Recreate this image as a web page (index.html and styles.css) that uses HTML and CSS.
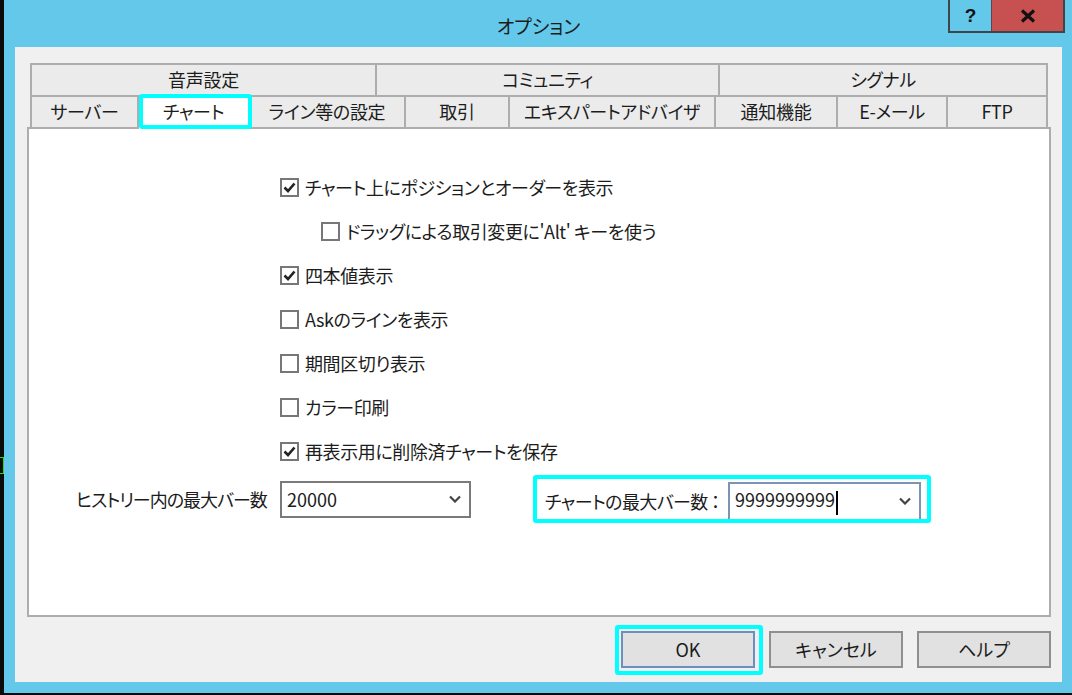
FILE: index.html
```html
<!DOCTYPE html>
<html lang="ja">
<head>
    <meta charset="UTF-8">
    <title>オプション</title>
    <link rel="stylesheet" href="styles.css">
</head>
<body>

<div class="chart-edge"><div class="chart-mark"></div></div>

<div class="window">
    <!-- Title bar -->
    <div class="titlebar">
        <span class="title">オプション</span>
        <div class="controls">
            <div class="ctrl help">?</div>
            <div class="ctrl close">
                <svg width="16" height="14" viewBox="0 0 16 14"><path d="M2 1.5 L14 12.5 M14 1.5 L2 12.5" stroke="#111" stroke-width="3.2" fill="none"/></svg>
            </div>
        </div>
    </div>

    <div class="client">
        <!-- Tabs -->
        <div class="tabs">
            <div class="tab-row back">
                <div class="tab">音声設定</div>
                <div class="tab">コミュニティ</div>
                <div class="tab">シグナル</div>
            </div>
            <div class="tab-row front">
                <div class="tab">サーバー</div>
                <div class="tab active">チャート</div>
                <div class="tab">ライン等の設定</div>
                <div class="tab">取引</div>
                <div class="tab">エキスパートアドバイザ</div>
                <div class="tab">通知機能</div>
                <div class="tab">E-メール</div>
                <div class="tab">FTP</div>
            </div>
        </div>

        <!-- Chart page -->
        <div class="panel">
            <div class="options">
                <div class="check on">
                    <span class="box"><svg width="13" height="11" viewBox="0 0 13 11"><path d="M1.5 5.5 L5 9 L11.5 1.5" stroke="#222" stroke-width="2.6" fill="none"/></svg></span>
                    <span>チャート上にポジションとオーダーを表示</span>
                </div>
                <div class="check sub">
                    <span class="box"></span>
                    <span>ドラッグによる取引変更に'Alt' キーを使う</span>
                </div>
                <div class="check on">
                    <span class="box"><svg width="13" height="11" viewBox="0 0 13 11"><path d="M1.5 5.5 L5 9 L11.5 1.5" stroke="#222" stroke-width="2.6" fill="none"/></svg></span>
                    <span>四本値表示</span>
                </div>
                <div class="check">
                    <span class="box"></span>
                    <span>Askのラインを表示</span>
                </div>
                <div class="check">
                    <span class="box"></span>
                    <span>期間区切り表示</span>
                </div>
                <div class="check">
                    <span class="box"></span>
                    <span>カラー印刷</span>
                </div>
                <div class="check on">
                    <span class="box"><svg width="13" height="11" viewBox="0 0 13 11"><path d="M1.5 5.5 L5 9 L11.5 1.5" stroke="#222" stroke-width="2.6" fill="none"/></svg></span>
                    <span>再表示用に削除済チャートを保存</span>
                </div>
            </div>

            <div class="bars">
                <span class="bars-label">ヒストリー内の最大バー数</span>
                <div class="combo">
                    <span>20000</span>
                    <svg width="12" height="8" viewBox="0 0 12 8"><path d="M1 1.5 L6 6.5 L11 1.5" stroke="#444" stroke-width="2.2" fill="none"/></svg>
                </div>
                <div class="mark">
                    <span class="mark-label">チャートの最大バー数 ：</span>
                    <div class="combo focus">
                        <span>9999999999<span class="caret"></span></span>
                        <svg width="12" height="8" viewBox="0 0 12 8"><path d="M1 1.5 L6 6.5 L11 1.5" stroke="#444" stroke-width="2.2" fill="none"/></svg>
                    </div>
                </div>
            </div>
        </div>

        <!-- Dialog buttons -->
        <div class="buttons">
            <div class="btn default">OK</div>
            <div class="btn">キャンセル</div>
            <div class="btn">ヘルプ</div>
        </div>
    </div>
</div>

</body>
</html>
```

FILE: styles.css
```css
body {
    margin: 0;
    height: 695px;
    overflow: hidden;
    display: flex;
    background: #0b0b0b;
    font-family: "Noto Sans CJK JP", "Noto Sans", sans-serif;
    font-feature-settings: "palt";
    color: #1c1c1c;
}
.chart-edge {
    width: 4px;
    flex: none;
}
.chart-mark {
    margin-top: 457px;
    height: 15px;
    border: 1px solid #1fe01f;
    border-left: 0;
}
.window {
    position: relative;
    width: 1068px;
    height: 693px;
    box-sizing: border-box;
    padding: 0 10px 11px 11px;
    background: #63c8ea;
    display: flex;
    flex-direction: column;
}
.titlebar {
    height: 47px;
    flex: none;
    box-sizing: border-box;
    padding-top: 4px;
    display: flex;
    align-items: center;
    justify-content: center;
    font-size: 19px;
    color: #1b1b1b;
}
.controls {
    position: absolute;
    top: 0;
    right: 7px;
    height: 33px;
    display: flex;
    box-sizing: border-box;
    border: 2px solid #3f4548;
    border-top: 0;
}
.ctrl {
    display: flex;
    align-items: center;
    justify-content: center;
}
.help {
    width: 41px;
    font-family: "Liberation Sans", sans-serif;
    font-weight: bold;
    font-size: 19px;
    color: #111;
}
.close {
    width: 71px;
    background: #c75050;
    border-left: 1px solid #6a4040;
}
.client {
    flex: 1;
    background: #f0f0f0;
    display: flex;
    flex-direction: column;
    padding: 16px 11px 14px 12px;
}
.tabs {
    margin: 0 3px;
}
.tab-row {
    display: grid;
    grid-template-rows: 32px;
    border-right: 2px solid #adadad;
}
.tab-row.back {
    grid-template-columns: 345px 343px 1fr;
}
.tab-row.front {
    grid-template-columns: 107px 111px 156px 104px 206px 122px 110px 1fr;
}
.tab {
    border-top: 2px solid #adadad;
    border-left: 2px solid #adadad;
    background: #ebebeb;
    padding-bottom: 3px;
    display: flex;
    align-items: center;
    justify-content: center;
    font-size: 18px;
    letter-spacing: -0.3px;
    white-space: nowrap;
}
.tab.active {
    position: relative;
    z-index: 2;
    align-self: start;
    height: 34px;
    box-sizing: border-box;
    background: #fff;
    padding-bottom: 5px;
}
.tab.active::after {
    content: "";
    position: absolute;
    top: -3px;
    left: 0;
    right: -4px;
    bottom: 0;
    border: 4px solid #00ffff;
    border-radius: 3px;
}
.panel {
    flex: 1;
    background: #fff;
    border: 2px solid #adadad;
}
.options {
    padding: 36px 0 0 251px;
}
.check {
    height: 44px;
    display: flex;
    align-items: center;
    gap: 6px;
    font-size: 18px;
    letter-spacing: -0.4px;
    white-space: nowrap;
}
.check.sub {
    padding-left: 41px;
}
.box {
    width: 19px;
    height: 19px;
    box-sizing: border-box;
    border: 2px solid #777;
    background: #fff;
    display: flex;
    align-items: center;
    justify-content: center;
}
.bars {
    height: 48px;
    margin-top: 2px;
    padding-left: 47px;
    display: flex;
    align-items: center;
    font-size: 18px;
    white-space: nowrap;
}
.bars-label {
    width: 204px;
    letter-spacing: -1px;
}
.combo {
    width: 191px;
    height: 37px;
    flex: none;
    box-sizing: border-box;
    border: 2px solid #7a7a7a;
    background: #fff;
    padding: 0 8px 0 5px;
    display: flex;
    align-items: center;
    justify-content: space-between;
}
.mark {
    margin-left: 62px;
    width: 398px;
    height: 48px;
    box-sizing: border-box;
    border: 4px solid #00ffff;
    border-radius: 3px;
    padding: 3px 6px 0 8px;
    display: flex;
    align-items: flex-start;
    overflow: hidden;
}
.mark-label {
    align-self: center;
    letter-spacing: -0.6px;
}
.combo.focus {
    margin-left: auto;
    width: 193px;
    height: 40px;
    padding-bottom: 3px;
    border-color: #7b93b5;
}
.caret {
    display: inline-block;
    width: 2px;
    height: 24px;
    margin-left: 1px;
    background: #000;
    vertical-align: middle;
}
.buttons {
    display: flex;
    justify-content: flex-end;
    gap: 14px;
    margin-top: 14px;
}
.btn {
    width: 134px;
    height: 37px;
    box-sizing: border-box;
    border: 2px solid #8f8f8f;
    background: #e1e1e1;
    padding-bottom: 2px;
    display: flex;
    align-items: center;
    justify-content: center;
    font-size: 18px;
}
.btn.default {
    position: relative;
    border-color: #6d8fc0;
}
.btn.default::after {
    content: "";
    position: absolute;
    top: -8px;
    left: -8px;
    right: -10px;
    bottom: -9px;
    border: 4px solid #00ffff;
    border-radius: 3px;
}
```
